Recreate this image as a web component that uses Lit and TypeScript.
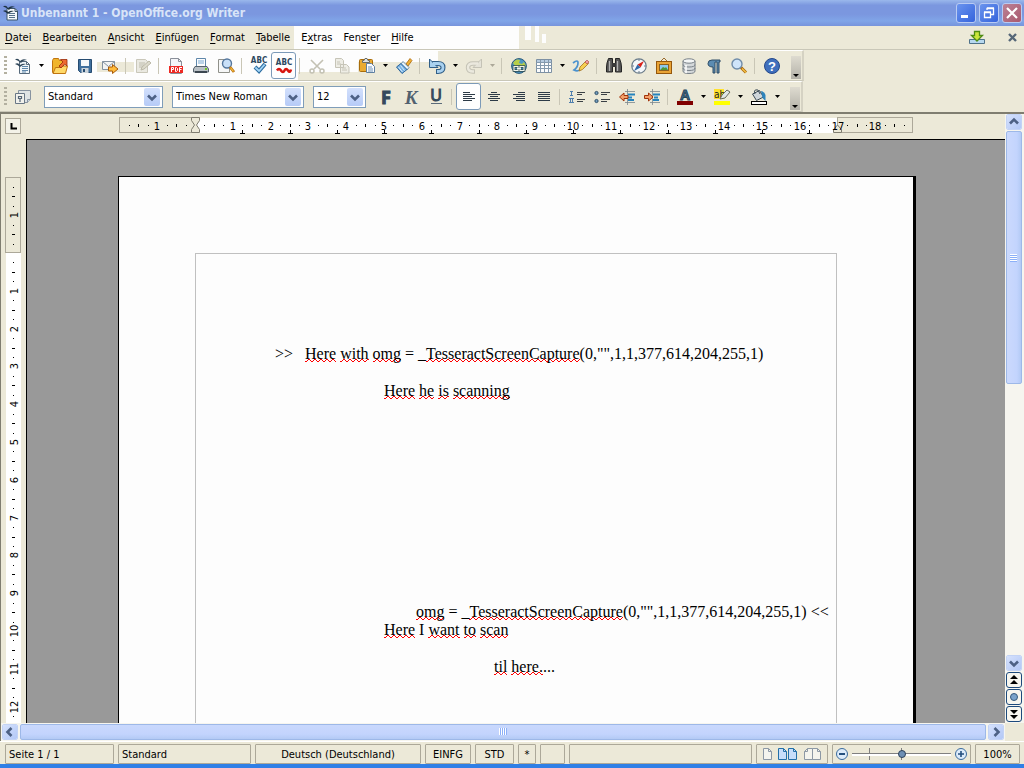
import { LitElement, html, svg, css, nothing } from "lit";
import { customElement } from "lit/decorators.js";
import { classMap } from "lit/directives/class-map.js";

const icons: Record<string, unknown> = {
  writer: svg`<path d="M4 3.500h8l2.500 2.500v9H4z" fill="#f4f8fb" stroke="#3c5468"/><path d="M12 3.500v3h3" fill="none" stroke="#3c5468"/><path d="M6 8.500h6M6 10.500h6M6 12.500h6" stroke="#56718a"/><path d="M0 1.500q3-2 5 1.500 3-3 7-1-4 0-6 3-3-3-6-3.500z" fill="#1f3444"/><path d="M0 6q3-2 5 1 3-2 6-1-4 1-6 3-2-2-5-3z" fill="#1f3444"/>`,
  new: svg`<path d="M4.500 3.500h7l3 3v9h-10z" fill="#eef4f8" stroke="#56697b"/><path d="M11.500 3.500v3h3" fill="none" stroke="#56697b"/><path d="M7 8.500h6M7 10.500h6M7 12.500h6M7 14h4" stroke="#5f87aa"/><path d="M0 1.500q3-2 5 1.500 3-3 7-1-4 0-6 3-3-3-6-3.500z" fill="#30475a"/><path d="M0 6q3-2 5 1 3-2 6-1-4 1-6 3-2-2-5-3z" fill="#30475a"/>`,
  open: svg`<path d="M.5 2.500l1-2h5l1 2h4v12H.5z" fill="#f0b52c" stroke="#c07410"/><path d="M1 15.500l2.500-6h5l1-1.500h6l-2 7.500z" fill="#ffd968" stroke="#c07410"/><path d="M7 8l4-4-2.500-2.500h6.500v6.500L12.800 6 9 10z" fill="#ee6a31" stroke="#982806" stroke-width=".8"/>`,
  save: svg`<path d="M1.500 1.500h13v13h-11l-2-2z" fill="#3f6f9d" stroke="#264b70"/><path d="M4 2h8v6H4z" fill="#f5f8fa"/><path d="M4.500 10h7v5h-7z" fill="#cbd4db"/><path d="M6 11h2v3H6z" fill="#264b70"/>`,
  mail: svg`<path d="M.5 3.500h12v8H.5z" fill="#f3f4f3" stroke="#8593a0"/><path d="M.5 3.500l6 5 6-5" fill="none" stroke="#8593a0"/><path d="M6.500 9h4V6.500L16 11l-5.500 4.500V13h-4z" fill="#ffbb3a" stroke="#a85b0b"/>`,
  edit: svg`<path d="M1.500 1.500h9l2 2v11h-11z" fill="#eae9e1" stroke="#c9c7b9"/><path d="M4 5h6M4 7h5M4 9h3" stroke="#bebcac"/><path d="M6 12l1-3 7-6 2 2-7 6z" fill="#dcdacb" stroke="#bcb9a8"/>`,
  pdf: svg`<path d="M2.500.5h8l3 3v12h-11z" fill="#f4f5f8" stroke="#8a8f99"/><path d="M10.500.5v3h3" fill="none" stroke="#8a8f99"/><rect x="1" y="8" width="14" height="7" fill="#ee2a24"/><path d="M3.500 14V9.500h2v2h-2M7.500 9.500v4h1l1-1v-2l-1-1zM11.500 14V9.500h2.500M11.500 11.500h2" fill="none" stroke="#fff"/>`,
  print: svg`<path d="M3.500.5h9v8h-9z" fill="#fbfcfd" stroke="#5f87aa"/><path d="M5 3h6M5 5h6" stroke="#79a9d2"/><path d="M2 8.500h12l1.500 2.500v3H.5v-3z" fill="#b9c0c5" stroke="#55626d"/><path d="M2 14h12" stroke="#3b4650" stroke-width="2"/><path d="M12 11h2" stroke="#70c82a" stroke-width="2"/>`,
  preview: svg`<path d="M.5 1.500h9l2 2v11H.5z" fill="#f6f7f7" stroke="#90918a"/><circle cx="9" cy="5.500" r="4.500" fill="#c9e0f8" stroke="#55779d" stroke-width="1.400"/><path d="M12 9l4 5" stroke="#b96e12" stroke-width="2.800"/><path d="M12.500 9.500l3 4" stroke="#f7c33a" stroke-width="1.200"/>`,
  spell: svg`<text x="8" y="5" text-anchor="middle" class="abc">ABC</text><path d="M4 9l4 4 6-7" fill="none" stroke="#2c6da1" stroke-width="4"/><path d="M4.400 9.500L8 13l5.600-6.500" fill="none" stroke="#a5d6f7" stroke-width="1.800"/>`,
  autospell: svg`<text x="8" y="7" text-anchor="middle" class="abc">ABC</text><path d="M1 12.500q2-3 4 0t3.500 0 3.500 0 3-1" fill="none" stroke="#d8160f" stroke-width="2.600"/>`,
  cut: svg`<path d="M2 2l9 9M14 2L5 11" stroke="#c3c1b3" stroke-width="1.600"/><circle cx="3" cy="13" r="2" fill="none" stroke="#c3c1b3" stroke-width="1.500"/><circle cx="13" cy="13" r="2" fill="none" stroke="#c3c1b3" stroke-width="1.500"/>`,
  copy: svg`<path d="M1.500.5h6l2 2v7h-8zM6.500 6.500h6l2.500 2.500v6H6.500z" fill="#eeede5" stroke="#c6c4b7"/><path d="M3 4h3M3 6h4M8 10h4M8 12h5" stroke="#c6c4b7"/>`,
  paste: svg`<rect x=".5" y="1.500" width="13" height="12" rx="1" fill="#eaab32" stroke="#a96d0b"/><path d="M3.500 2.500h1.500l1-2h2l1 2h1.500v2h-7z" fill="#dfe3e6" stroke="#6c6c63"/><path d="M7.500 5.500h5l3 3v6h-8z" fill="#fafcff" stroke="#5e7fa1"/><path d="M9 9h4M9 11h5M9 13h5" stroke="#7194b8"/>`,
  brush: svg`<path d="M10 6l4-5.500 2 2L12 8z" fill="#f1b135" stroke="#a56307" stroke-width=".8"/><path d="M7 3.500l6 6-2 2.500-6-6z" fill="#eaf4fb" stroke="#4b7397" stroke-width=".8"/><path d="M5 5.500l6 6-5 4-5.500-6.500z" fill="#77b1e2" stroke="#2f6699"/><path d="M2.500 9l4 5M4.500 7.500l4 5" stroke="#d9edfb"/>`,
  undo: svg`<path d="M3 5.500h6q5 0 5 4t-5 4H7" fill="none" stroke="#315f88" stroke-width="5"/><path d="M.5 1v8.500H9L.5 1z" fill="#a9d1ef" stroke="#315f88"/><path d="M4 5.500h5q5 0 5 4t-5 4H8" fill="none" stroke="#a9d1ef" stroke-width="2.800"/>`,
  redo: svg`<path d="M13 5.500H7q-5 0-5 4t5 4h2" fill="none" stroke="#c5c3b6" stroke-width="4.400"/><path d="M15.500 1v8.500H7z" fill="#e5e3d8" stroke="#c5c3b6"/><path d="M12 5.500H7q-5 0-5 4t5 4h1" fill="none" stroke="#ebe9de" stroke-width="2.400"/>`,
  link: svg`<circle cx="8" cy="8" r="7.400" fill="#4c97c5" stroke="#2a5878"/><path d="M2 5q3-5 7-3l-1 3 3 1 2-2 2 4-4 1-3-2-3 2z" fill="#b7cf48"/><path d="M3 8.500h4v4H3zM9 8.500h4v4H9zM6 10.500h4" fill="none" stroke="#314a4c" stroke-width="2.600"/><path d="M3 8.500h4v4H3zM9 8.500h4v4H9zM6 10.500h4" fill="none" stroke="#f1f5ec" stroke-width="1.200"/>`,
  table: svg`<path d="M.5 1.500h15v13H.5z" fill="#fbfcfd" stroke="#7d90a3"/><path d="M1 3h14" stroke="#b6cbe0" stroke-width="2"/><path d="M0 4.500h16M0 7.500h16M0 10.500h16M4.500 2v12M8.500 2v12M12.500 2v12" stroke="#8499ad"/>`,
  draw: svg`<path d="M0 5q5-4 5 0T1 12q4 2 7-1" fill="none" stroke="#4b92cf" stroke-width="1.700"/><path d="M6 13l1-4 6-6 2.500 2.500-6 6z" fill="#f6cf50" stroke="#a3701c" stroke-width=".8"/><path d="M12 4l2-2 2 2-2 2z" fill="#ef9a9c" stroke="#a93c3c" stroke-width=".6"/>`,
  find: svg`<path d="M1 5l1.500-4.500h4V14H.5V9zM15 5L13.500.5h-4V14h6V9z" fill="#565656" stroke="#242424"/><path d="M6 5h4v4H6z" fill="#383838"/><path d="M3.500 3v10M11.500 3v10" stroke="#b4b4b4" stroke-width="1.300"/>`,
  compass: svg`<circle cx="8" cy="8" r="7.200" fill="#f3f7fa" stroke="#6a7b89" stroke-width="1.200"/><path d="M8 1v2M8 13v2M1 8h2M13 8h2" stroke="#6a7b89"/><path d="M13 3L9.500 9.500l-3-3z" fill="#d9241c"/><path d="M3 13l3.500-6.500 3 3z" fill="#346aa9"/>`,
  gallery: svg`<path d="M4 4l4-4 4 4" fill="none" stroke="#9a6a2b"/><rect x=".5" y="3.500" width="15" height="12" fill="#e9a335" stroke="#95570c"/><rect x="3.500" y="6.500" width="9" height="6" fill="#8cc8ee" stroke="#8d5f1f"/><path d="M4 12l3-3 2 1 1-1 2 3z" fill="#4f9638"/>`,
  db: svg`<path d="M2 3v10q0 2.500 6 2.500t6-2.500V3" fill="#d5d9db" stroke="#788087"/><ellipse cx="8" cy="3" rx="6" ry="2.200" fill="#f4f6f6" stroke="#788087"/><path d="M2 6.500Q2 9 8 9t6-2.500M2 10q0 2.500 6 2.500T14 10" fill="none" stroke="#788087"/><path d="M5 7v8" stroke="#fff" stroke-width="1.500"/>`,
  pilcrow: svg`<path d="M14 2H6Q2 2 2 5.500T7 9v6h2V4h2v11h2V4h1z" fill="#5c8cb2" stroke="#2e4c66"/>`,
  zoom: svg`<path d="M10 9.500l5 5" stroke="#a7670d" stroke-width="3"/><path d="M11 10.500l4 4" stroke="#f7c245" stroke-width="1.400"/><circle cx="6" cy="6" r="5" fill="#cfe4fa" stroke="#708ca9" stroke-width="1.400"/>`,
  help: svg`<circle cx="8" cy="8" r="7.500" fill="#3f6fbd" stroke="#24488a"/><text x="8" y="13" text-anchor="middle" class="qm">?</text>`,
  styles: svg`<path d="M3.500 1.500h12v9l-3 3h-9z" fill="#dfe3e4" stroke="#8793a0"/><path d="M12.500 13.500v-3h3" fill="#cfd8e0" stroke="#8793a0"/><path d="M.5 4.500h9v10h-9z" fill="#f1f1ec" stroke="#697786"/><path d="M3.500 7.500h3v2h-3zM5 9.500V13" fill="none" stroke="#566677" stroke-width="1.200"/>`,
  bold: svg`<text x="8" y="15" text-anchor="middle" class="fmt b">F</text>`,
  italic: svg`<text x="8" y="15" text-anchor="middle" class="fmt i">K</text>`,
  under: svg`<text x="8" y="12" text-anchor="middle" class="fmt u">U</text><path d="M3 14.500h11" stroke="#5b6b79"/>`,
  left: svg`<path d="M2 3.500h7M2 5.500h12M2 7.500h9M2 9.500h12M2 11.500h9" stroke="#2d3b47"/>`,
  center: svg`<path d="M5 3.500h6M2 5.500h12M4 7.500h8M2 9.500h12M4 11.500h8" stroke="#2d3b47"/>`,
  right: svg`<path d="M7 3.500h7M2 5.500h12M5 7.500h9M2 9.500h12M5 11.500h9" stroke="#2d3b47"/>`,
  justify: svg`<path d="M2 3.500h12M2 5.500h12M2 7.500h12M2 9.500h12M2 11.500h12" stroke="#2d3b47"/>`,
  numbers: svg`<path d="M8 3.500h8M8 5.500h5M8 10.500h8M8 12.500h6" stroke="#3a4045"/><path d="M1 2.500h3M2.500 3v3M1 6.500h3M0 9.500h5M1.500 10v3M3.500 10v3M0 13.500h5" stroke="#4f7fae"/>`,
  bullets: svg`<path d="M7 3.500h9M7 5.500h6M7 10.500h9M7 12.500h6" stroke="#3a4045"/><circle cx="2.500" cy="4" r="1.600" fill="#719cbd" stroke="#2d4e69"/><circle cx="2.500" cy="12" r="1.600" fill="#719cbd" stroke="#2d4e69"/>`,
  outdent: svg`<path d="M6 2.500h10M6 13.500h10M8.500 0v16" stroke="#7b868e" stroke-width=".8"/><path d="M9 5.500h7M9 8.500h4M9 11h6" stroke="#2583bd" stroke-width="1.800"/><path d="M.5 8L5 4v2.500h4v3H5V12z" fill="#f3a06a" stroke="#a1330b"/>`,
  indent: svg`<path d="M6 2.500h10M6 13.500h10M8.500 0v16" stroke="#7b868e" stroke-width=".8"/><path d="M9 5.500h7M10 8.500h4M9 11h6" stroke="#2583bd" stroke-width="1.800"/><path d="M9 8L4.500 4v2.500h-4v3h4V12z" fill="#f3a06a" stroke="#a1330b"/>`,
  color: svg`<text x="8" y="11" text-anchor="middle" class="acol">A</text><path d="M0 14h16" stroke="#800000" stroke-width="4"/>`,
  highlight: svg`<path d="M0 0h10v10H0z" fill="#ffe12e"/><text x="0" y="9" class="ab">ab</text><path d="M6 10l2-4 5-5 3 2-5 6z" fill="#e1e6e8" stroke="#6b6b5a"/><path d="M0 14h16" stroke="#ffff00" stroke-width="4"/>`,
  fill: svg`<path d="M1.500 5l7-3.500 4 6.500-7 3.500z" fill="#cfd6da" stroke="#3b4a55"/><path d="M4 5q-2-5 3-4l2 4" fill="none" stroke="#3b4a55"/><path d="M10 2q4 1 4.500 4v6l-3-3z" fill="#2d83bb"/><rect x=".5" y="12.500" width="15" height="3" fill="#fff" stroke="#000"/>`,
};

const icon = (name: string) =>
  html`<svg class="ico" viewBox="0 0 16 16" aria-hidden="true">${icons[name]}</svg>`;

type Tool = [kind: string, label?: string];

const STANDARD_TOOLS: Tool[] = [
  ["new", "Neu"], ["v"], ["open", "Öffnen"], ["save", "Speichern"], ["mail", "E-Mail"], ["|"],
  ["edit", "Datei bearbeiten"], ["|"], ["pdf", "PDF"], ["print", "Drucken"], ["preview", "Seitenansicht"], ["|"],
  ["spell", "Rechtschreibung"], ["autospell", "Automatische Rechtschreibprüfung"], ["|"],
  ["cut", "Ausschneiden"], ["copy", "Kopieren"], ["paste", "Einfügen"], ["v"], ["brush", "Format übertragen"], ["|"],
  ["undo", "Rückgängig"], ["v"], ["redo", "Wiederherstellen"], ["w"], ["|"],
  ["link", "Hyperlink"], ["table", "Tabelle"], ["v"], ["draw", "Zeichnen"], ["|"],
  ["find", "Suchen"], ["compass", "Navigator"], ["gallery", "Gallery"], ["db", "Datenquellen"],
  ["pilcrow", "Steuerzeichen"], ["zoom", "Maßstab"], ["|"], ["help", "Hilfe"],
];

const FORMAT_TOOLS: Tool[] = [
  ["bold", "Fett"], ["italic", "Kursiv"], ["under", "Unterstrichen"], ["|"],
  ["left", "Linksbündig"], ["center", "Zentriert"], ["right", "Rechtsbündig"], ["justify", "Blocksatz"], ["|"],
  ["numbers", "Nummerierung"], ["bullets", "Aufzählung"], ["outdent", "Einzug verkleinern"], ["indent", "Einzug vergrößern"], ["|"],
  ["color", "Zeichenfarbe"], ["v"], ["highlight", "Hervorhebung"], ["v"], ["fill", "Hintergrund"], ["v"],
];

const MENUS: [string, string, string][] = [
  ["", "D", "atei"], ["", "B", "earbeiten"], ["", "A", "nsicht"], ["", "E", "infügen"], ["", "F", "ormat"],
  ["", "T", "abelle"], ["E", "x", "tras"], ["Fen", "s", "ter"], ["", "H", "ilfe"],
];

const CM = 37.8;
const PRESSED = new Set(["autospell", "left"]);

const chevron = (dir: "up" | "down" | "left" | "right") => {
  const d = { up: "M4 9.500l4-4 4 4", down: "M4 6.500l4 4 4-4", left: "M9.500 4l-4 4 4 4", right: "M6.500 4l4 4-4 4" }[dir];
  return html`<svg class="ico" viewBox="0 0 16 16" aria-hidden="true"><path d=${d} fill="none" stroke="#4d6185" stroke-width="2.600"/></svg>`;
};

@customElement("app-root")
export class AppRoot extends LitElement {
  static styles = css`
    :host {
      display: flex;
      flex-direction: column;
      height: 100vh;
      overflow: hidden;
      background: #ece9d8;
      color: #000;
      font: 11px/14px "DejaVu Sans Condensed", "Noto Sans", sans-serif;
      box-sizing: border-box;
    }
    *, *::before, *::after { box-sizing: border-box; }
    button, select, input { font: inherit; color: inherit; margin: 0; padding: 0; border: 0; background: none; }
    button { display: inline-flex; align-items: center; justify-content: center; flex: none; }
    .ico { width: 16px; height: 16px; display: block; flex: none; overflow: visible; }

    .title {
      display: flex; align-items: center; gap: 2px; flex: none; height: 26px; padding: 0 2px 0 3px;
      background: linear-gradient(#9ab8ec, #7b97df 20%, #7b97df 55%, #80a5e8 80%, #7794dc);
      color: #d8e4f8;
    }
    .title h1 { flex: 1; margin: 0; font: bold 12px/16px "DejaVu Sans Condensed", sans-serif; }
    .win { width: 20px; height: 20px; border: 1px solid #b9cbf3; border-radius: 3px; background: linear-gradient(135deg, #6a94ee, #3563dc); }
    .win + .win { margin-left: 1px; }
    .win.close { background: linear-gradient(135deg, #bb8296, #a9596e); }

    .menu { display: flex; align-items: center; flex: none; height: 24px; padding: 1px 4px 0 5px; gap: 11px; border-bottom: 1px solid #c9c7b8;
      background:
        linear-gradient(#fdfdfd, #fdfdfd) 525px 0 / 6px 14px no-repeat,
        linear-gradient(#fdfdfd, #fdfdfd) 535px 0 / 4px 16px no-repeat,
        linear-gradient(#fdfdfd, #fdfdfd) 542px 8px / 4px 9px no-repeat,
        linear-gradient(#fdfdfd, #fdfdfd) 294px 0 / 225px 100% no-repeat; }
    .menu a { color: inherit; text-decoration: none; }
    .menu u { text-underline-offset: 2px; }
    .menu .spacer { flex: 1; }
    .menu button + button { margin-left: 8px; }

    .bar { display: flex; align-items: center; flex: none; align-self: flex-start; height: 31px; border-top: 1px solid #fff; border-bottom: 1px solid #c9c7b8; border-right: 2px solid #d5d2c3; padding: 0 1px 0 4px; }
    .bar.std {
      background:
        linear-gradient(#fdfdfd, #fdfdfd) 0 0 / 438px 11px no-repeat,
        linear-gradient(#fdfdfd, #fdfdfd) 0 11px / 97px 10px no-repeat,
        linear-gradient(#fdfdfd, #fdfdfd) 134px 2px / 224px 19px no-repeat,
        linear-gradient(#fdfdfd, #fdfdfd) 0 21px / 298px 9px no-repeat;
    }
    .grip { width: 3px; height: 20px; margin-right: 3px; background: repeating-linear-gradient(#b3b0a0 0 2px, transparent 2px 4px); flex: none; }
    .tool { width: 25px; height: 27px; }
    .tool.on { border: 1px solid #7c9ab8; border-radius: 3px; background: #fefefe; }
    .drop { width: 12px; height: 24px; }
    .sep { width: 8px; height: 16px; flex: none; background: linear-gradient(#c9c6b6, #c9c6b6) 3px 0 / 1px 100% no-repeat; }
    .more { width: 10px; height: 23px; margin-left: 7px; align-items: flex-end; padding-bottom: 2px; align-self: flex-end; margin-bottom: 1px; background: linear-gradient(#dedbd0, #b3b1a8); }

    .abc { font: bold 8px "DejaVu Sans Condensed", sans-serif; fill: #2c485f; }
    .qm { font: bold 13px "Liberation Sans", sans-serif; fill: #fff; }
    .fmt { fill: #34495b; font-size: 19px; }
    .b { font-family: "Noto Sans", sans-serif; font-weight: bold; font-size: 18px; stroke: #34495b; stroke-width: 1px; }
    .i { font-family: "Liberation Serif", serif; font-style: italic; font-weight: bold; fill: #51616f; }
    .u { font-family: "Noto Sans", sans-serif; font-size: 16px; stroke: #34495b; stroke-width: 1px; }
    .acol { font: bold 14px "Liberation Sans", sans-serif; fill: #46718f; stroke: #26445a; stroke-width: 1px; }
    .ab { font: 10px "DejaVu Sans Condensed", sans-serif; fill: #222; }

    .combo { display: grid; grid-template: 21px / 1fr 18px; flex: none; margin-right: 9px; background: #fff; border: 1px solid #7f9db9; height: 22px; align-items: center; }
    .combo select { grid-area: 1 / 1 / 2 / 3; appearance: none; height: 20px; padding-left: 3px; width: 100%; outline: 0; }
    .combo .arrow { grid-area: 1 / 2; width: 16px; height: 18px; padding-top: 1px; border-radius: 2px; background: linear-gradient(#d3e0fc, #b6cbf7); pointer-events: none; }
    .c1 { width: 119px; margin-left: 9px; }
    .c2 { width: 132px; }
    .c3 { width: 53px; margin-right: 7px; }

    .work { flex: 1; min-height: 0; display: grid; grid-template: 25px 1fr 18px / 25px 1fr 19px; border-top: 2px solid #7f7d70; border-left: 1px solid #7f7d70; }
    .tabkind { width: 16px; height: 16px; margin: 4px 0 0 4px; border: 1px solid #aca899; background: #f3f2e8; }
    .ruler { display: block; width: 100%; height: 100%; overflow: hidden; font: 11px "DejaVu Sans Condensed", sans-serif; }
    .vruler { grid-area: 2 / 1; }
    .cell { min-width: 0; min-height: 0; overflow: hidden; }
    .canvas { grid-area: 2 / 2; background: #999; border-top: 1px solid #000; border-left: 1px solid #000; overflow: hidden; display: flex; justify-content: flex-start; padding: 36px 89px 0 91px; min-width: 0; min-height: 0; }
    .page { flex: 1; height: 1124px; background: #fdfdfd; border: 1px solid #000; border-right-width: 3px; padding: 76px; }
    .text { height: 100%; border: 1px solid #c0c0c0; padding: 91px 0 0; font: 16px/18px "Liberation Serif", serif; white-space: pre; outline: 0; }
    .text p { margin: 0 0 19px; }
    .text p.far { margin-bottom: 203px; }
    .text p.tight { margin-bottom: 0; }
    .i80 { padding-left: 79px; }
    .i188 { padding-left: 188px; }
    .i220 { padding-left: 220px; }
    .i299 { padding-left: 298px; }
    .err { background: url("data:image/svg+xml,%3Csvg xmlns='http://www.w3.org/2000/svg' width='6' height='3' shape-rendering='crispEdges' fill='%23f00'%3E%3Cpath d='M0 2h2v1H0zM2 1h1v1H2zM3 0h2v1H3zM5 1h1v1H5z'/%3E%3C/svg%3E") left bottom / 6px 3px repeat-x; }

    .vscroll { grid-area: 1 / 3 / 3 / 4; display: flex; flex-direction: column; align-items: center; gap: 1px; padding: 0 2px 1px 0; background: #f6f5ef; min-height: 0; }
    .sb { width: 16px; height: 16px; border-radius: 2px; border: 1px solid #fff; background: linear-gradient(135deg, #d5e1fd, #b3c8f6); outline: 1px solid #c3d3f5; outline-offset: -1px; }
    .thumb { background: linear-gradient(90deg, #cbd9fd, #c3d4fd 70%, #b3caf5); border: 1px solid #9db8e8; border-radius: 2px; display: flex; align-items: center; justify-content: center; }
    .vthumb { width: 16px; height: 253px; }
    .track { flex: 1; }
    .lines { width: 7px; height: 8px; background: repeating-linear-gradient(#fff 0 1px, #8cb0f8 1px 2px); }
    .nav { width: 16px; height: 16px; border: 1px solid #1d4a7c; border-radius: 3px; background: #f7f6ef; }
    .hscroll { grid-area: 3 / 1 / 4 / 3; display: flex; gap: 2px; padding: 0 1px 1px 1px; align-items: center; background: #f6f5ef; }
    .hthumb { flex: 1; height: 16px; background: linear-gradient(#c9d8fd, #c3d4fd 65%, #b3caf5); }
    .hthumb .lines { width: 8px; height: 7px; background: repeating-linear-gradient(90deg, #fff 0 1px, #8cb0f8 1px 2px); }

    .status { display: flex; flex: none; gap: 4px; height: 23px; padding: 2px 4px 1px 5px; border-top: 1px solid #fff; }
    .status > div { display: flex; align-items: center; justify-content: center; height: 20px; border: 1px solid #aca899; border-radius: 1px; padding: 2px 3px 0; flex: none; white-space: nowrap; }
    .status > .l { justify-content: flex-start; }
    .status > .w110 { width: 109px; } .status > .w134 { width: 133px; } .status > .w166 { width: 166px; }
    .status > .w46 { width: 46px; } .status > .w39 { width: 39px; } .status > .w18 { width: 18px; } .status > .w25 { width: 25px; }
    .status > .w72 { width: 72px; padding-top: 0; } .status > .w140 { width: 139px; gap: 4px; padding-top: 0; } .status > .w45 { width: 45px; }
    .status > .grow { flex: 1; }
    .range { flex: 1; display: flex; align-items: center; height: 18px;
      background:
        linear-gradient(#808080, #808080) 17px 3px / 1px 12px no-repeat,
        linear-gradient(#808080, #808080) 49px 3px / 1px 12px no-repeat; }
    .range input { appearance: none; width: 100%; height: 16px; }
    .range input::-webkit-slider-runnable-track { height: 3px; background: linear-gradient(#808080 0 1px, #fff 1px); }
    .range input::-webkit-slider-thumb { appearance: none; width: 8px; height: 8px; margin-top: -3px; border-radius: 50%; border: 1px solid #2c4059; background: #6d8fb5; }
    .zb { width: 12px; height: 12px; border-radius: 50%; border: 1px solid #3b6b9d; background: #dcebfa; }
    .zb svg { width: 10px; height: 10px; }
    .foot { flex: none; height: 4px; background: #2f7fe6; }
  `;

  private tools(list: Tool[]) {
    return list.map(([kind, label]) => {
      if (kind === "|") return html`<span class="sep"></span>`;
      if (kind === "v" || kind === "w")
        return html`<button class="drop" aria-label="Auswahl"><svg width="5" height="3" viewBox="0 0 5 3"><path d="M0 0h5L2.500 3z" fill=${kind === "v" ? "#000" : "#aca899"}/></svg></button>`;
      return html`<button class=${classMap({ tool: true, on: PRESSED.has(kind) })} aria-label=${label ?? nothing}>${icon(kind)}</button>`;
    });
  }

  private more() {
    return html`<button class="more" aria-label="Weitere"><svg width="6" height="3" viewBox="0 0 6 3"><path d="M0 0h6L3 3z"/></svg></button>`;
  }

  private combo(cls: string, label: string, value: string) {
    return html`<label class="combo ${cls}"><select aria-label=${label}><option>${value}</option></select><span class="arrow">${chevron("down")}</span></label>`;
  }

  /* Quarter dots, half dashes and centimetre numbers along one axis. */
  private marks(from: number, to: number, vertical: boolean) {
    const out = [];
    for (let q = from; q <= to; q++) {
      if (q === 0) continue;
      const p = Math.round((q * CM) / 4);
      if (q % 4 === 0) {
        const n = Math.abs(q / 4);
        out.push(vertical
          ? svg`<text transform="translate(16 ${p}) rotate(-90)" text-anchor="middle">${n}</text>`
          : svg`<text x=${p} y="16" text-anchor="middle">${n}</text>`);
      } else if (q % 2 === 0) {
        out.push(vertical ? svg`<rect x="10" y=${p} width="3" height="1"/>` : svg`<rect x=${p} y="10" width="1" height="3"/>`);
      } else {
        out.push(vertical ? svg`<rect x="11" y=${p} width="1" height="1"/>` : svg`<rect x=${p} y="11" width="1" height="1"/>`);
      }
    }
    return out;
  }

  private hruler() {
    const tabs = Array.from({ length: 13 }, (_, i) => Math.round((i + 1) * 47.25));
    return svg`
      <rect x="0" y="4" width="642" height="15" fill="#fff"/>
      <rect x="-75.500" y="3.500" width="76" height="15" fill="#ece9d8" stroke="#aca899"/>
      <rect x="642.500" y="3.500" width="75" height="15" fill="#ece9d8" stroke="#aca899"/>
      <path d="M638.500 18.500v-3l4-4.500 4 4.500v3z" fill="#ece9d8" stroke="#7f7d70"/>
      ${this.marks(-7, 75, false)}
      ${tabs.map((x) => svg`<path d="M${x - 2} 19.500h5M${x + 0.5} 16v4" stroke="#000"/>`)}
      <path d="M-3.500 3.500h8v3l-3 4.500 3 4.500v3h-8v-3l3-4.500-3-4.500z" fill="#ece9d8" stroke="#7f7d70"/>`;
  }

  render() {
    const e = (t: string) => html`<span class="err">${t}</span>`;
    const navArrow = (d: string) => html`<svg class="ico" viewBox="0 0 16 16"><path d=${d}/></svg>`;
    return html`
      <header class="title">
        ${icon("writer")}
        <h1>Unbenannt 1 - OpenOffice.org Writer</h1>
        <button class="win" aria-label="Minimieren"><svg class="ico" viewBox="0 0 16 16"><path d="M3 10h7v3H3z" fill="#fff"/></svg></button>
        <button class="win" aria-label="Wiederherstellen"><svg class="ico" viewBox="0 0 16 16"><path d="M3.500 7.500h6v5h-6zM3 7h7M6 5V3.500h6.500v6H10M6 3h7" fill="none" stroke="#fff" stroke-width="1.300"/></svg></button>
        <button class="win close" aria-label="Schließen"><svg class="ico" viewBox="0 0 16 16"><path d="M3 3l10 10M13 3L3 13" stroke="#fff" stroke-width="2.200"/></svg></button>
      </header>
      <nav class="menu">
        ${MENUS.map(([a, k, b]) => html`<a href="#">${a}<u>${k}</u>${b}</a>`)}
        <span class="spacer"></span>
        <button aria-label="Updates"><svg class="ico" viewBox="0 0 16 16"><path d="M.5 9.500h15v4H.5z" fill="#b7d8ef" stroke="#4f7189"/><path d="M5.500 1.500h5v4h3L8 11 2.500 5.500h3z" fill="#cbe63b" stroke="#4f8c12" stroke-width="1.300"/></svg></button>
        <button aria-label="Dokument schließen"><svg class="ico" viewBox="0 0 16 16"><path d="M5 4l7 7M12 4l-7 7" stroke="#566778" stroke-width="2.400"/></svg></button>
      </nav>
      <div class="bar std"><span class="grip"></span>${this.tools(STANDARD_TOOLS)}${this.more()}</div>
      <div class="bar">
        <span class="grip"></span>
        <button class="tool" aria-label="Formatvorlagen">${icon("styles")}</button>
        ${this.combo("c1", "Vorlage", "Standard")}
        ${this.combo("c2", "Schriftart", "Times New Roman")}
        ${this.combo("c3", "Schriftgröße", "12")}
        ${this.tools(FORMAT_TOOLS)}${this.more()}
      </div>
      <main class="work">
        <button class="tabkind" aria-label="Tabulator"><svg width="14" height="14" viewBox="0 0 14 14"><path d="M5.500 4v5.500H11" fill="none" stroke="#000" stroke-width="2"/></svg></button>
        <div class="cell"><svg class="ruler"><g transform="translate(169 0)">${this.hruler()}</g></svg></div>
        <div class="cell vruler"><svg class="ruler"><g transform="translate(1 114)">
          <rect x="4" y="0" width="15" height="700" fill="#fff"/>
          <rect x="3.500" y="-75.500" width="15" height="75" fill="#ece9d8" stroke="#aca899"/>
          ${this.marks(-7, 50, true)}
        </g></svg></div>
        <div class="canvas">
          <article class="page">
            <div class="text" contenteditable="true" spellcheck="false"><p class="i80">&gt;&gt;   ${e("Here")} ${e("with")} ${e("omg")} = _${e("TesseractScreenCapture")}(0,"",1,1,377,614,204,255,1)</p><p class="i188 far">${e("Here")} ${e("he")} ${e("is")} ${e("scanning")}</p><p class="i220 tight">${e("omg")} = _${e("TesseractScreenCapture")}(0,"",1,1,377,614,204,255,1) &lt;&lt;</p><p class="i188">${e("Here")} I ${e("want")} ${e("to")} ${e("scan")}</p><p class="i299">${e("til")} ${e("here.")}...</p></div>
          </article>
        </div>
        <div class="vscroll">
          <button class="sb" aria-label="Nach oben">${chevron("up")}</button>
          <div class="thumb vthumb"><span class="lines"></span></div>
          <div class="track"></div>
          <button class="sb" aria-label="Nach unten">${chevron("down")}</button>
          <button class="nav" aria-label="Vorherige Seite">${navArrow("M8 3l4 4H4zM8 8l4 4H4z")}</button>
          <button class="nav" aria-label="Navigation"><svg class="ico" viewBox="0 0 16 16"><circle cx="8" cy="8" r="3.500" fill="#7aa3cb" stroke="#35597c"/></svg></button>
          <button class="nav" aria-label="Nächste Seite">${navArrow("M8 8l4-4H4zM8 13l4-4H4z")}</button>
        </div>
        <div class="hscroll">
          <button class="sb" aria-label="Nach links">${chevron("left")}</button>
          <div class="thumb hthumb"><span class="lines"></span></div>
          <button class="sb" aria-label="Nach rechts">${chevron("right")}</button>
        </div>
      </main>
      <footer class="status">
        <div class="l w110">Seite 1 / 1</div>
        <div class="l w134">Standard</div>
        <div class="w166">Deutsch (Deutschland)</div>
        <div class="w46">EINFG</div>
        <div class="w39">STD</div>
        <div class="w18">*</div>
        <div class="w25"></div>
        <div class="grow"></div>
        <div class="w72">
          <svg width="58" height="12" viewBox="0 0 58 12">
            <path d="M.5.5h5l3 3v8h-8z" fill="#f4f4ee" stroke="#8c98a5"/><path d="M5.500.5v3h3" fill="none" stroke="#8c98a5"/>
            <path d="M15.500.5h5l3 3v8h-8zM25.500.5h5l3 3v8h-8z" fill="#c7defa" stroke="#2470a8"/><path d="M20.500.5v3h3M30.500.5v3h3" fill="none" stroke="#2470a8"/>
            <path d="M49.500.5h5l3 3v8h-8zM49.500.5h-5l-3 3v8h8z" fill="#f4f4ee" stroke="#8c98a5"/><path d="M54.500.5v3h3M44.500.5v3h-3" fill="none" stroke="#8c98a5"/>
          </svg>
        </div>
        <div class="w140">
          <button class="zb" aria-label="Verkleinern"><svg viewBox="0 0 10 10"><path d="M2 5h6" stroke="#24507f" stroke-width="2"/></svg></button>
          <span class="range"><input type="range" aria-label="Zoom" min="0" max="100" value="50"></span>
          <button class="zb" aria-label="Vergrößern"><svg viewBox="0 0 10 10"><path d="M2 5h6M5 2v6" stroke="#24507f" stroke-width="1.600"/></svg></button>
        </div>
        <div class="w45">100%</div>
      </footer>
      <div class="foot"></div>
    `;
  }
}
